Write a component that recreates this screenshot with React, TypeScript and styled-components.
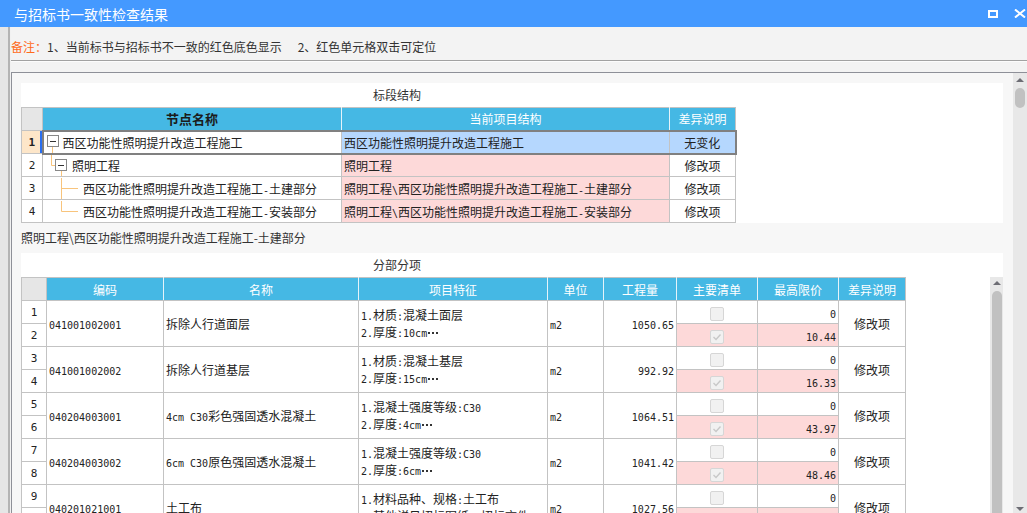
import React from "react";
import styled, { createGlobalStyle } from "styled-components";

const GlobalStyle = createGlobalStyle`
  html, body { margin: 0; padding: 0; }
  body {
    width: 1027px;
    height: 513px;
    overflow: hidden;
    background: #f3f3f3;
    color: #222;
    font-family: "Noto Sans CJK SC", "Noto Sans", sans-serif;
    font-size: 12px;
  }
`;

const Window = styled.div`
  width: 1027px;
  height: 513px;
  display: flex;
  flex-direction: column;
  overflow: hidden;
`;

const TitleBar = styled.div`
  height: 27px;
  flex-shrink: 0;
  display: flex;
  align-items: center;
  padding-left: 14px;
  background: #4499ff;
  color: #fff;
  font-size: 14px;
  overflow: hidden;
`;

const WinButtons = styled.div`
  margin-left: auto;
  display: flex;
  align-items: center;
  gap: 16px;
  margin-right: -1px;
`;

const Body = styled.div`
  flex: 1;
  min-height: 0;
  display: flex;
`;

const LeftStrip = styled.div`
  width: 11px;
  flex-shrink: 0;
  background: linear-gradient(to right, #e6e6e6 0, #e6e6e6 8px, #b4b4b4 8px, #b4b4b4 10px, #f1f1f1 10px);
`;

const Main = styled.div`
  flex: 1;
  min-width: 0;
  display: flex;
  flex-direction: column;
`;

const Note = styled.div`
  height: 33px;
  flex-shrink: 0;
  padding-top: 5px;
  box-sizing: border-box;
  display: flex;
  align-items: center;
  color: #333;
  white-space: pre;
`;

const NoteLabel = styled.span`
  color: #ff6a1a;
`;

const NoteGap = styled.span`
  display: inline-block;
  width: 16px;
`;

const Divider = styled.div`
  height: 2px;
  flex-shrink: 0;
  border-top: 1px solid #a2a2a2;
  border-bottom: 1px solid #fcfcfc;
  box-sizing: border-box;
  margin-bottom: 10px;
`;

const Panel = styled.div`
  flex: 1;
  min-height: 0;
  display: flex;
  border-top: 1px solid #8e9098;
  border-left: 1px solid #8e9098;
  background: #f7f7f7;
`;

const Content = styled.div`
  flex: 1;
  min-width: 0;
  padding: 10px 10px 0 9px;
  display: flex;
  flex-direction: column;
  overflow: hidden;
`;

const Section = styled.div<{ $grow?: boolean }>`
  background: #fff;
  display: flex;
  flex-direction: column;
  flex: ${(p) => (p.$grow ? "1" : "0 0 140px")};
  min-height: 0;
`;

const Caption = styled.div`
  height: 24px;
  flex-shrink: 0;
  line-height: 24px;
  padding-left: 352px;
  color: #333;
`;

const PathLabel = styled.div`
  height: 30px;
  flex-shrink: 0;
  line-height: 30px;
  color: #333;
`;

const TableArea = styled.div`
  flex: 1;
  min-height: 0;
  display: flex;
  justify-content: space-between;
  overflow: hidden;
`;

const Grid = styled.table<{ $width: number }>`
  border-collapse: collapse;
  table-layout: fixed;
  width: ${(p) => p.$width}px;
  flex-shrink: 0;
  align-self: flex-start;

  tr {
    height: 23px;
  }
`;

const HeadCorner = styled.th`
  background: #e6e6e6;
  border: 1px solid #c3c3c3;
  padding: 0;
`;

const HeadCell = styled.th<{ $dark?: boolean }>`
  background: #45b8e4;
  border: 1px solid #c3c3c3;
  border-right-color: #e4f3fa;
  color: ${(p) => (p.$dark ? "#1b1b1b" : "#fff")};
  font-weight: ${(p) => (p.$dark ? "bold" : "normal")};
  font-size: ${(p) => (p.$dark ? "13px" : "12px")};
  padding: 0;
  white-space: nowrap;

  &:last-child {
    border-right-color: #c3c3c3;
  }
`;

const RowNum = styled.td<{ $active?: boolean }>`
  border: 1px solid #c3c3c3;
  text-align: center;
  padding: 0;
  font-family: "DejaVu Sans Mono", "Liberation Mono", monospace;
  font-size: 11px;
  font-weight: ${(p) => (p.$active ? "bold" : "normal")};
  background: ${(p) => (p.$active ? "#fde6c9" : "#fff")};
  box-shadow: ${(p) => (p.$active ? "inset -2px 0 0 #2a6ff0" : "none")};
`;

const Cell = styled.td<{
  $align?: string;
  $bg?: string;
  $sel?: boolean;
  $first?: boolean;
  $last?: boolean;
}>`
  border: 1px solid #c3c3c3;
  padding: 0 2px;
  text-align: ${(p) => p.$align ?? "left"};
  background: ${(p) => p.$bg ?? "#fff"};
  white-space: nowrap;
  overflow: hidden;
  vertical-align: middle;
  ${(p) =>
    p.$sel &&
    `border-top: 2px solid #808080; border-bottom: 2px solid #808080;`}
  ${(p) => p.$sel && p.$first && `border-left: 2px solid #808080;`}
  ${(p) => p.$sel && p.$last && `border-right: 2px solid #808080;`}
`;

const NodeCell = styled.div`
  display: flex;
  align-items: center;
  height: 21px;
`;

const Lines = styled.div`
  line-height: 15px;
`;

const Mono = styled.span`
  font-family: "DejaVu Sans Mono", "Liberation Mono", monospace;
  font-size: 10px;
  color: #222;
`;

const Dots = styled.span`
  display: inline-block;
  width: 10px;
  height: 0;
  margin-left: 1px;
  vertical-align: middle;
  border-bottom: 2px dotted #333;
`;

const Box = styled.span`
  display: inline-flex;
  align-items: center;
  justify-content: center;
  width: 14px;
  height: 14px;
  box-sizing: border-box;
  border: 1px solid #d6d6d6;
  border-radius: 2px;
  background: #f1f1f1;
  vertical-align: middle;
`;

const ScrollTrack = styled.div<{ $width: number; $top: number }>`
  width: ${(p) => p.$width}px;
  flex-shrink: 0;
  background: #e8e8e8;
  display: flex;
  flex-direction: column;
  align-items: center;
  padding-top: ${(p) => p.$top}px;
  box-sizing: border-box;
  overflow: hidden;
`;

const ArrowUp = styled.span`
  width: 0;
  height: 0;
  border-left: 4px solid transparent;
  border-right: 4px solid transparent;
  border-bottom: 4px solid #6d6d74;
`;

const ArrowDown = styled.span`
  width: 0;
  height: 0;
  margin-top: auto;
  margin-bottom: 2px;
  border-left: 4px solid transparent;
  border-right: 4px solid transparent;
  border-top: 4px solid #6d6d74;
`;

const Thumb = styled.span<{ $height: number }>`
  width: 10px;
  height: ${(p) => p.$height}px;
  flex-shrink: 0;
  margin-top: 6px;
  border-radius: 5px;
  background: #c1c1c1;
`;

const PINK = "#fdd9d9";
const BLUE = "#b5d7fe";
const ORANGE = "#f8c47c";

// SimSun-like mix: half-width runs narrow and monospaced, CJK at full size,
// a trailing "…" becomes the centred dot run the grid draws for cut text
function Mixed({ text }: { text: string }) {
  const cut = text.endsWith("…");
  const body = cut ? text.slice(0, -1) : text;
  const parts = body.split(/([\x20-\x7e]+)/).filter(Boolean);
  return (
    <>
      {parts.map((p, i) =>
        /^[\x20-\x7e]+$/.test(p) ? (
          <Mono key={i}>{p}</Mono>
        ) : (
          <React.Fragment key={i}>{p}</React.Fragment>
        )
      )}
      {cut && <Dots />}
    </>
  );
}

function Tree({ level }: { level: number }) {
  if (level === 0)
    return (
      <svg width="19" height="21">
        <rect x="3.5" y="3.5" width="11" height="11" fill="#fff" stroke="#888" />
        <line x1="6" y1="9.5" x2="12" y2="9.5" stroke="#333" />
        <line x1="8.5" y1="15" x2="8.5" y2="21" stroke={ORANGE} />
      </svg>
    );
  if (level === 1)
    return (
      <svg width="29" height="21">
        <path d="M8.5 0V10.5H12" fill="none" stroke={ORANGE} />
        <rect x="12.5" y="4.5" width="11" height="11" fill="#fff" stroke="#888" />
        <line x1="15" y1="10.5" x2="21" y2="10.5" stroke="#333" />
        <line x1="18.5" y1="16" x2="18.5" y2="21" stroke={ORANGE} />
      </svg>
    );
  return (
    <svg width="40" height="21">
      <path
        d={level === 2 ? "M18.5 0V21M18.5 10.5H35" : "M18.5 0V10.5H35"}
        fill="none"
        stroke={ORANGE}
      />
    </svg>
  );
}

const structure = [
  { node: "西区功能性照明提升改造工程施工", cur: "西区功能性照明提升改造工程施工", diff: "无变化", level: 0 },
  { node: "照明工程", cur: "照明工程", diff: "修改项", level: 1 },
  { node: "西区功能性照明提升改造工程施工-土建部分", cur: "照明工程\\西区功能性照明提升改造工程施工-土建部分", diff: "修改项", level: 2 },
  { node: "西区功能性照明提升改造工程施工-安装部分", cur: "照明工程\\西区功能性照明提升改造工程施工-安装部分", diff: "修改项", level: 3 },
];

const items = [
  { code: "041001002001", name: "拆除人行道面层", feat: ["1.材质:混凝土面层", "2.厚度:10cm…"], qty: "1050.65", price: ["0", "10.44"] },
  { code: "041001002002", name: "拆除人行道基层", feat: ["1.材质:混凝土基层", "2.厚度:15cm…"], qty: "992.92", price: ["0", "16.33"] },
  { code: "040204003001", name: "4cm C30彩色强固透水混凝土", feat: ["1.混凝土强度等级:C30", "2.厚度:4cm…"], qty: "1064.51", price: ["0", "43.97"] },
  { code: "040204003002", name: "6cm C30原色强固透水混凝土", feat: ["1.混凝土强度等级:C30", "2.厚度:6cm…"], qty: "1041.42", price: ["0", "48.46"] },
  { code: "040201021001", name: "土工布", feat: ["1.材料品种、规格:土工布", "2.其他详见招标图纸、招标文件…"], qty: "1027.56", price: ["0", "5.12"] },
];

function CheckBox({ checked }: { checked?: boolean }) {
  return (
    <Box>
      {checked && (
        <svg width="10" height="10" viewBox="0 0 10 10">
          <polyline points="1.5,5 4,7.5 8.5,2.5" fill="none" stroke="#c8c8c8" strokeWidth="1.4" />
        </svg>
      )}
    </Box>
  );
}

function StructureTable() {
  return (
    <Grid $width={714}>
      <colgroup>
        <col style={{ width: 21 }} />
        <col style={{ width: 299 }} />
        <col style={{ width: 328 }} />
        <col style={{ width: 66 }} />
      </colgroup>
      <thead>
        <tr>
          <HeadCorner />
          <HeadCell $dark>节点名称</HeadCell>
          <HeadCell>当前项目结构</HeadCell>
          <HeadCell>差异说明</HeadCell>
        </tr>
      </thead>
      <tbody>
        {structure.map((r, i) => {
          const sel = i === 0;
          return (
            <tr key={i}>
              <RowNum $active={sel}>{i + 1}</RowNum>
              <Cell $sel={sel} $first style={{ padding: 0 }}>
                <NodeCell>
                  <Tree level={r.level} />
                  <span>
                    <Mixed text={r.node} />
                  </span>
                </NodeCell>
              </Cell>
              <Cell $sel={sel} $bg={sel ? BLUE : PINK}>
                <Mixed text={r.cur} />
              </Cell>
              <Cell $sel={sel} $last $align="center" $bg={sel ? BLUE : "#fff"}>
                {r.diff}
              </Cell>
            </tr>
          );
        })}
      </tbody>
    </Grid>
  );
}

function ItemsTable() {
  const cols = [25, 117, 195, 189, 56, 73, 81, 81, 67];
  const heads = ["编码", "名称", "项目特征", "单位", "工程量", "主要清单", "最高限价", "差异说明"];
  return (
    <Grid $width={884}>
      <colgroup>
        {cols.map((w, i) => (
          <col key={i} style={{ width: w }} />
        ))}
      </colgroup>
      <thead>
        <tr>
          <HeadCorner />
          {heads.map((h) => (
            <HeadCell key={h}>{h}</HeadCell>
          ))}
        </tr>
      </thead>
      <tbody>
        {items.map((it, i) => (
          <React.Fragment key={it.code}>
            <tr>
              <RowNum>{i * 2 + 1}</RowNum>
              <Cell rowSpan={2}>
                <Mono>{it.code}</Mono>
              </Cell>
              <Cell rowSpan={2}>
                <Mixed text={it.name} />
              </Cell>
              <Cell rowSpan={2}>
                <Lines>
                  {it.feat.map((f) => (
                    <div key={f}>
                      <Mixed text={f} />
                    </div>
                  ))}
                </Lines>
              </Cell>
              <Cell rowSpan={2}>
                <Mono>m2</Mono>
              </Cell>
              <Cell rowSpan={2} $align="right">
                <Mono>{it.qty}</Mono>
              </Cell>
              <Cell $align="center">
                <CheckBox />
              </Cell>
              <Cell $align="right">
                <Mono>{it.price[0]}</Mono>
              </Cell>
              <Cell rowSpan={2} $align="center">
                修改项
              </Cell>
            </tr>
            <tr>
              <RowNum>{i * 2 + 2}</RowNum>
              <Cell $align="center" $bg={PINK}>
                <CheckBox checked />
              </Cell>
              <Cell $align="right" $bg={PINK}>
                <Mono>{it.price[1]}</Mono>
              </Cell>
            </tr>
          </React.Fragment>
        ))}
      </tbody>
    </Grid>
  );
}

export default function App() {
  return (
    <>
      <GlobalStyle />
      <Window>
        <TitleBar>
          与招标书一致性检查结果
          <WinButtons>
            <svg width="10" height="8">
              <rect x="1" y="1" width="8" height="6" fill="none" stroke="#fff" strokeWidth="2" />
            </svg>
            <svg width="14" height="9">
              <path d="M1 0.5L11 8.5M11 0.5L1 8.5" stroke="#fff" strokeWidth="2" />
            </svg>
          </WinButtons>
        </TitleBar>
        <Body>
          <LeftStrip />
          <Main>
            <Note>
              <NoteLabel>备注：</NoteLabel>
              1、当前标书与招标书不一致的红色底色显示
              <NoteGap />
              2、红色单元格双击可定位
            </Note>
            <Divider />
            <Panel>
              <Content>
                <Section>
                  <Caption>标段结构</Caption>
                  <StructureTable />
                </Section>
                <PathLabel>照明工程\西区功能性照明提升改造工程施工-土建部分</PathLabel>
                <Section $grow>
                  <Caption>分部分项</Caption>
                  <TableArea>
                    <ItemsTable />
                    <ScrollTrack $width={13} $top={4}>
                      <ArrowUp />
                      <Thumb $height={300} />
                    </ScrollTrack>
                  </TableArea>
                </Section>
              </Content>
              <ScrollTrack $width={14} $top={5}>
                <ArrowUp />
                <Thumb $height={20} />
                <ArrowDown />
              </ScrollTrack>
            </Panel>
          </Main>
        </Body>
      </Window>
    </>
  );
}
